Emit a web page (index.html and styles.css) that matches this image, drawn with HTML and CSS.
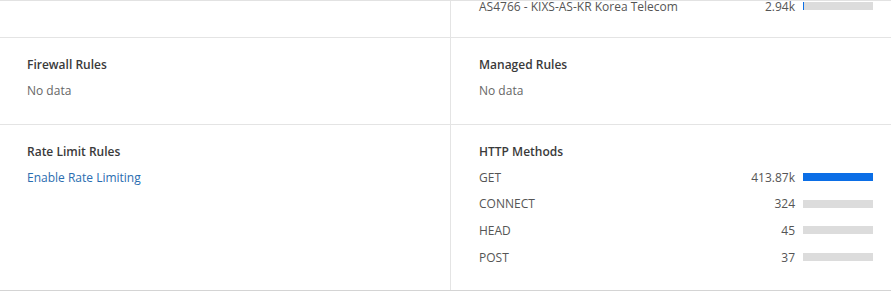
FILE: index.html
```html
<!DOCTYPE html>
<html>
<head>
  <title>Analytics</title>
  <link rel="stylesheet" href="styles.css">
</head>
<body>
  <div class="grid">
    <div class="cell top-cell"></div>
    <div class="cell top-cell">
      <div class="rows shifted">
        <div class="row">
          <span class="label">AS4766 - KIXS-AS-KR Korea Telecom</span>
          <span class="value">2.94k</span>
          <span class="bar"><span class="fill" style="width: 1%"></span></span>
        </div>
      </div>
    </div>

    <div class="cell">
      <div class="title">Firewall Rules</div>
      <div class="rows">
        <div class="row"><span class="empty">No data</span></div>
      </div>
    </div>
    <div class="cell">
      <div class="title">Managed Rules</div>
      <div class="rows">
        <div class="row"><span class="empty">No data</span></div>
      </div>
    </div>

    <div class="cell">
      <div class="title">Rate Limit Rules</div>
      <div class="rows">
        <div class="row"><a class="link" href="#">Enable Rate Limiting</a></div>
      </div>
    </div>
    <div class="cell">
      <div class="title">HTTP Methods</div>
      <div class="rows">
        <div class="row">
          <span class="label">GET</span>
          <span class="value">413.87k</span>
          <span class="bar"><span class="fill" style="width: 100%"></span></span>
        </div>
        <div class="row">
          <span class="label">CONNECT</span>
          <span class="value">324</span>
          <span class="bar"><span class="fill" style="width: 0%"></span></span>
        </div>
        <div class="row">
          <span class="label">HEAD</span>
          <span class="value">45</span>
          <span class="bar"><span class="fill" style="width: 0%"></span></span>
        </div>
        <div class="row">
          <span class="label">POST</span>
          <span class="value">37</span>
          <span class="bar"><span class="fill" style="width: 0%"></span></span>
        </div>
      </div>
    </div>
  </div>
</body>
</html>
```

FILE: styles.css
```css
body {
  margin: 0;
  font-family: "Open Sans", "Noto Sans", sans-serif;
  font-size: 12px;
  color: #555;
  background-color: #fff;
}

.grid {
  display: grid;
  grid-template-columns: 451px 1fr;
  border-top: 1px solid #e2e2e2;
  border-bottom: 1px solid #d4d4d4;
}

.cell {
  padding: 18px 18px 20px 27px;
  border-bottom: 1px solid #e4e4e4;
}

.cell:nth-child(odd) {
  border-right: 1px solid #e4e4e4;
}

.cell:nth-child(even) {
  padding-left: 28px;
}

.cell:nth-last-child(-n+2) {
  border-bottom: none;
}

.top-cell {
  height: 37px;
  padding-top: 0;
  padding-bottom: 0;
  box-sizing: border-box;
  overflow: hidden;
}

.title {
  height: 18px;
  line-height: 18px;
  font-weight: 600;
  color: #3a3a3a;
  margin-bottom: 3px;
}

.row {
  display: flex;
  align-items: center;
  height: 26.7px;
}

.shifted {
  margin-top: -8px;
}

.label {
  flex: 1;
}

.empty {
  color: #666;
}

.link {
  color: #2a6db0;
  text-decoration: none;
}

.value {
  text-align: right;
  margin-right: 8px;
}

.bar {
  width: 70px;
  height: 8px;
  background-color: #dcdcdc;
}

.fill {
  display: block;
  height: 100%;
  background-color: #0b6ee6;
}
```
